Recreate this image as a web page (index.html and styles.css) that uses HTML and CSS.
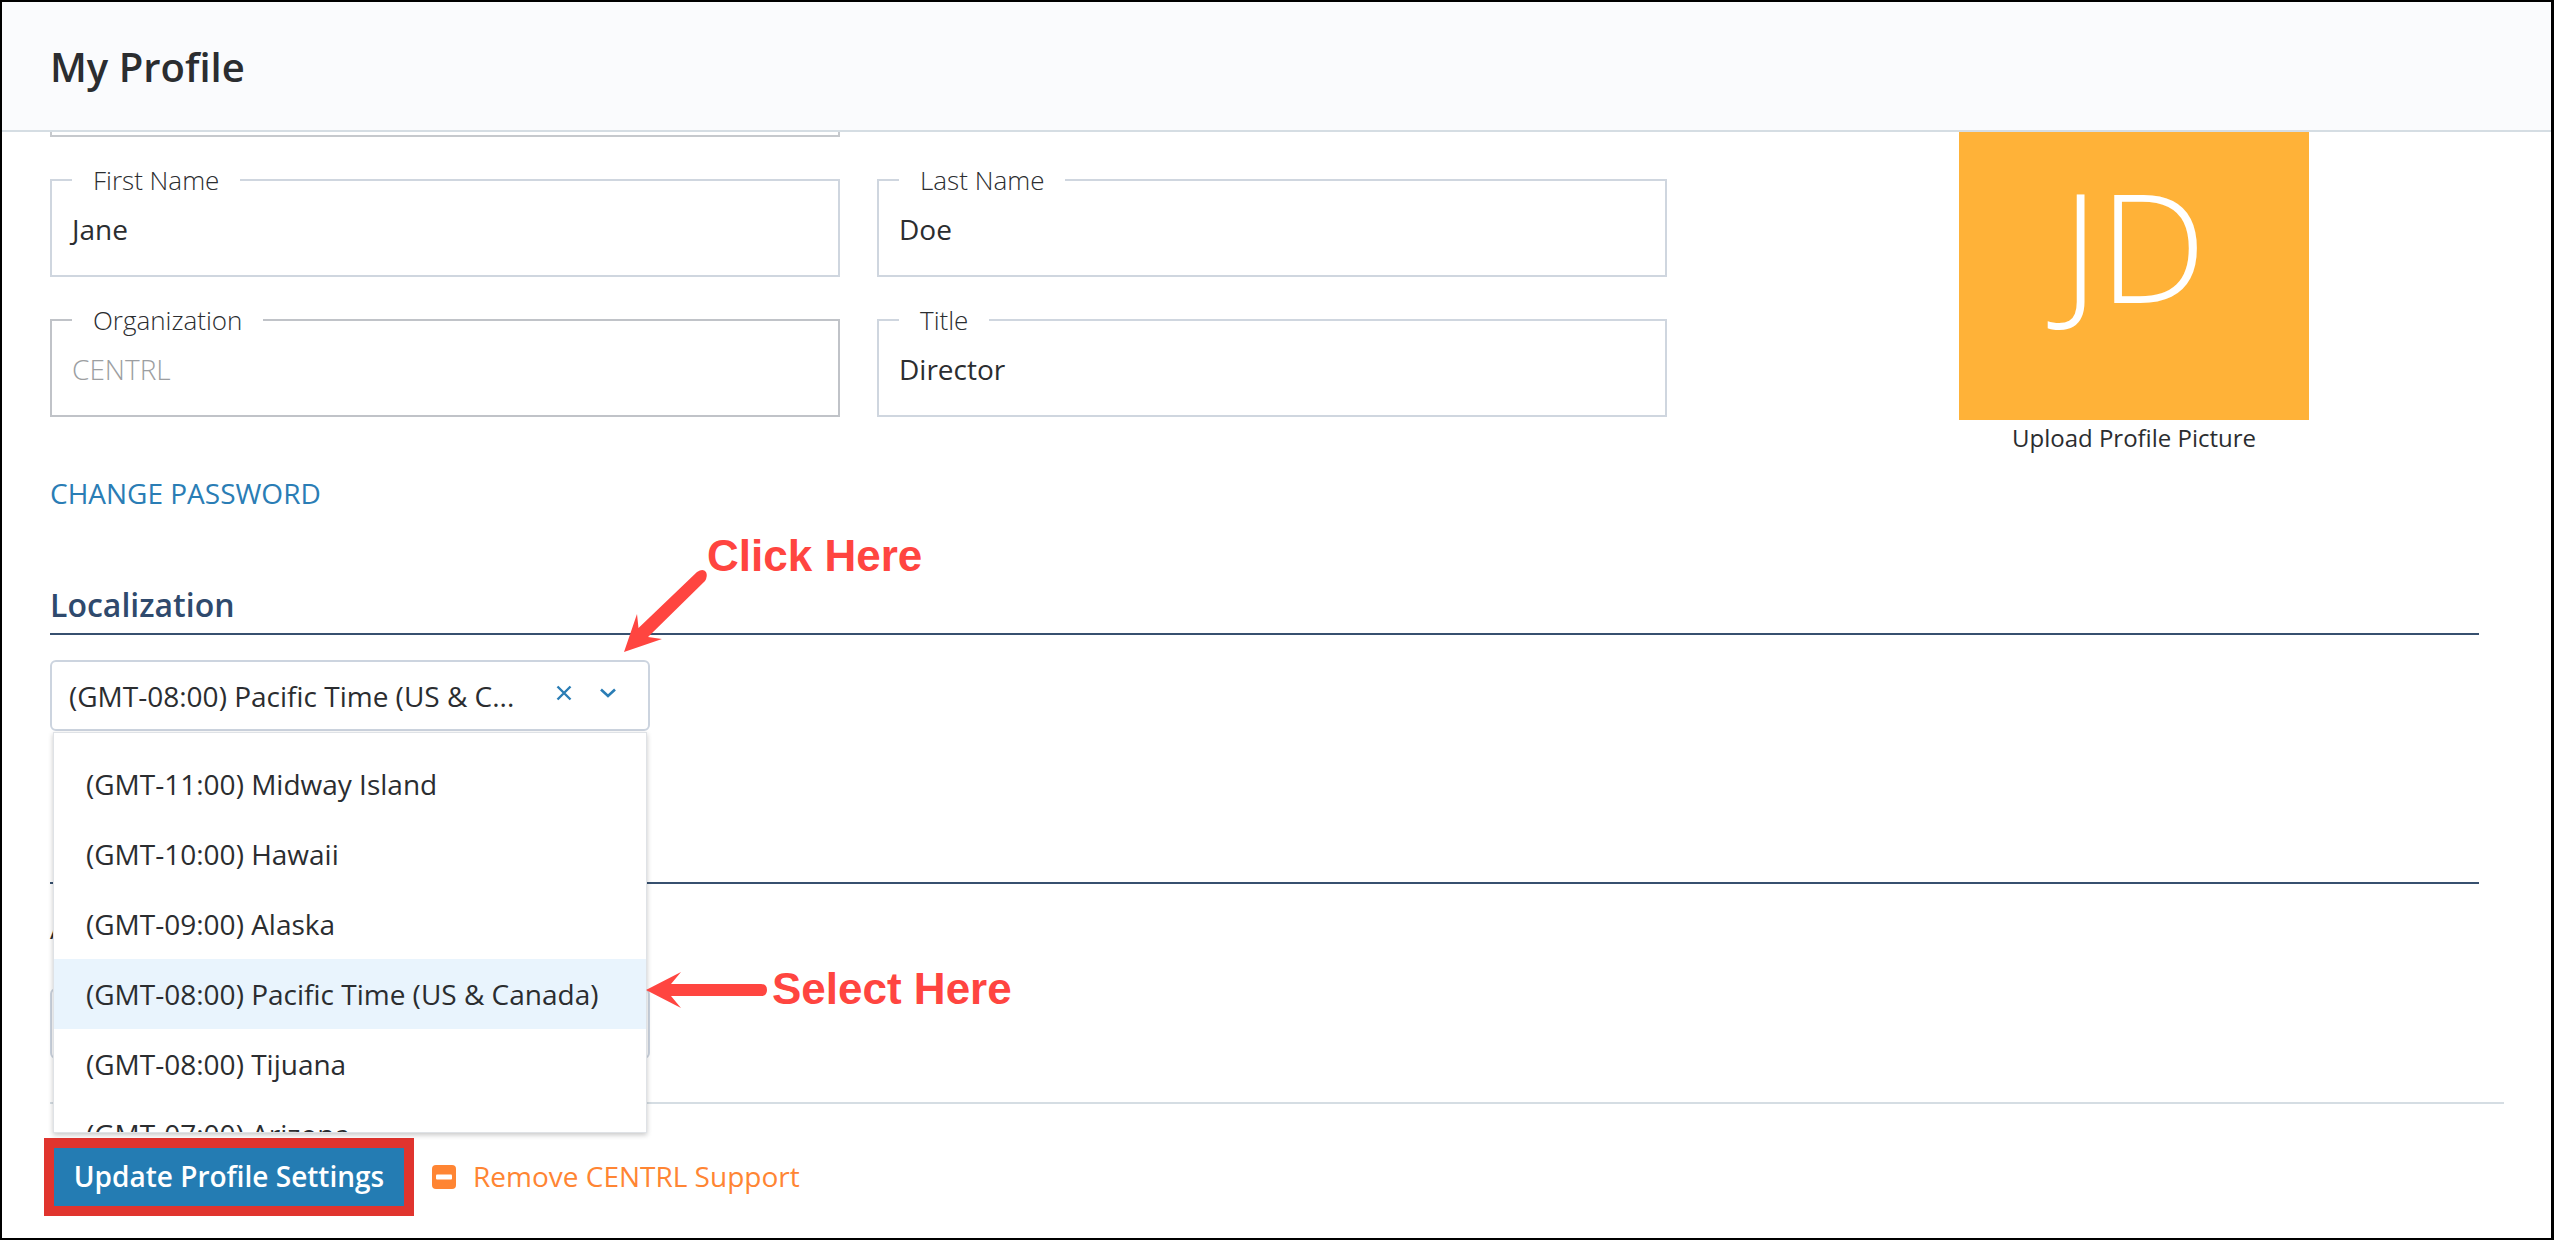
FILE: index.html
```html
<!DOCTYPE html>
<html lang="en">
<head>
<meta charset="utf-8">
<title>My Profile</title>
<link rel="stylesheet" href="styles.css">
</head>
<body>
<div class="frame">
  <header class="page-header"><h1>My Profile</h1></header>
  <main class="content">
    <div class="top-row">
      <div class="form-col">
        <div class="stub"></div>
        <div class="field-grid">
          <fieldset class="field"><legend>First Name</legend><span>Jane</span></fieldset>
          <fieldset class="field"><legend>Last Name</legend><span>Doe</span></fieldset>
          <fieldset class="field disabled"><legend>Organization</legend><span>CENTRL</span></fieldset>
          <fieldset class="field"><legend>Title</legend><span>Director</span></fieldset>
        </div>
        <a class="change-link" href="#">CHANGE PASSWORD</a>
      </div>
      <div class="avatar-col">
        <div class="avatar">JD</div>
        <div class="avatar-caption">Upload Profile Picture</div>
      </div>
    </div>

    <section class="section loc">
      <h2>Localization</h2>
      <div class="select-wrap">
        <div class="select">
          <span class="select-value">(GMT-08:00) Pacific Time (US &amp; C...</span>
          <svg class="ico-x" viewBox="0 0 16 16" width="16" height="16"><path d="M1.5 1.500l13 13M14.500 1.500l-13 13" fill="none" stroke="#2a7db5" stroke-width="2.4"/></svg>
          <svg class="ico-chev" viewBox="0 0 16 10" width="16" height="10"><path d="M1 1.500l7 6.500 7-6.500" fill="none" stroke="#2a7db5" stroke-width="2.6"/></svg>
        </div>
        <ul class="menu">
          <li>(GMT-11:00) Midway Island</li>
          <li>(GMT-10:00) Hawaii</li>
          <li>(GMT-09:00) Alaska</li>
          <li class="active">(GMT-08:00) Pacific Time (US &amp; Canada)</li>
          <li>(GMT-08:00) Tijuana</li>
          <li>(GMT-07:00) Arizona</li>
        </ul>
      </div>
    </section>

    <section class="section acc">
      <div class="acc-line"></div>
      <div class="acc-label">A</div>
      <div class="select under"></div>
    </section>

    <hr class="rule">

    <div class="actions">
      <button class="primary" type="button">Update Profile Settings</button>
      <a class="remove" href="#">
        <svg viewBox="0 0 24 24" width="24" height="24"><rect width="24" height="24" rx="4" fill="#ff8533"/><rect x="4" y="9.500" width="16" height="5" rx="1" fill="#fff"/></svg>
        <span>Remove CENTRL Support</span>
      </a>
    </div>
  </main>

  <svg class="arrows" viewBox="0 0 2554 1240" width="2554" height="1240">
    <path d="M624 652L637 614 638.500 628 697 572Q703 568 706 572 708 576 705 581L648 637 662 639Z" fill="#ff4540"/>
    <path d="M646 990L681 972 671 984H761Q767 984 767 990 767 996 761 996H671L681 1008Z" fill="#ff4540"/>
  </svg>
  <div class="note note-click">Click Here</div>
  <div class="note note-select">Select Here</div>
</div>
</body>
</html>
```

FILE: styles.css
```css
* { box-sizing: border-box; }
html, body { margin: 0; padding: 0; }
body { background: #fff; font-family: "Open Sans", sans-serif; color: #2b2d30; }
.frame {
  position: relative;
  width: 2554px;
  height: 1240px;
  border: 2px solid #000;
  border-right-width: 3px;
  overflow: hidden;
  background: #fff;
}
.page-header {
  height: 130px;
  background: #fafbfd;
  border-bottom: 2px solid #d5dde3;
  display: flex;
  align-items: center;
  padding-left: 48px;
}
.page-header h1 { margin: 0; font-size: 40px; font-weight: 600; color: #2b2d30; }
.content { padding-left: 48px; }
.top-row { display: flex; height: 376px; }
.form-col { width: 1617px; }
.stub {
  height: 5px;
  width: 790px;
  border: 2px solid #c6c9cd;
  border-top: 0;
}
.field-grid {
  display: grid;
  grid-template-columns: 790px 790px;
  column-gap: 37px;
  row-gap: 27px;
  margin-top: 27px;
}
.field {
  margin: 0;
  padding: 0 0 0 20px;
  height: 113px;
  min-width: 0;
  border: 2px solid #cfd6df;
  font-size: 28px;
}
.field legend {
  padding: 0 21px;
  font-size: 26px;
  font-weight: 300;
  line-height: 32px;
  color: #2b2d30;
}
.field span { display: block; line-height: 36px; margin-top: 15px; }
.field.disabled { border-color: #c0c3c8; }
.field.disabled span { color: #9c9ea1; font-weight: 300; }
.change-link {
  display: block;
  margin-top: 58px;
  font-size: 28px;
  line-height: 36px;
  color: #2a7db5;
  text-decoration: none;
}
.avatar-col { margin-left: 292px; width: 350px; }
.avatar {
  height: 288px;
  background: #ffb238;
  color: #fff;
  font-size: 152px;
  font-weight: 350;
  line-height: 226px;
  text-align: center;
}
.avatar-caption { font-size: 24px; line-height: 30px; margin-top: 3px; text-align: center; }
.section { width: 2429px; }
.section h2 {
  margin: 0;
  font-size: 32px;
  font-weight: 600;
  line-height: 40px;
  color: #2f4a6d;
  border-bottom: 2px solid #37506f;
  padding-bottom: 8px;
}
.loc { margin-top: 77px; height: 249px; }
.select-wrap { position: relative; width: 600px; margin-top: 25px; }
.select {
  height: 71px;
  border: 2px solid #ccd4df;
  border-radius: 6px;
  display: flex;
  align-items: center;
  padding-left: 17px;
  font-size: 28px;
}
.select-value { width: 476px; white-space: nowrap; }
.ico-x { margin: -6px 0 0 11px; }
.ico-chev { margin: -6px 0 0 28px; }
.menu {
  position: absolute;
  z-index: 2;
  top: 72px;
  left: 3px;
  width: 594px;
  height: 401px;
  margin: 0;
  padding: 16px 0 0;
  list-style: none;
  overflow: hidden;
  background: #fff;
  border: 1px solid #dfe2e6;
  box-shadow: 0 2px 5px rgba(0, 0, 0, .22);
  font-size: 28px;
}
.menu li { height: 70px; line-height: 70px; padding-left: 32px; white-space: nowrap; }
.menu li.active { background: #e9f4fd; }
.acc { height: 268px; }
.acc-line { height: 50px; border-bottom: 2px solid #37506f; }
.acc-label { margin-top: 26px; font-size: 28px; line-height: 36px; }
.under { width: 600px; margin-top: 42px; }
.rule {
  width: 2454px;
  margin: 0;
  border: 0;
  border-top: 2px solid #d5dde3;
}
.actions { display: flex; align-items: center; margin: 34px 0 0 -6px; }
.primary {
  width: 370px;
  height: 78px;
  background: #247cb3;
  border: 10px solid #e0342e;
  color: #fff;
  font: 600 28px "Open Sans", sans-serif;
  padding: 0 0 3px;
}
.remove {
  display: flex;
  align-items: center;
  gap: 17px;
  margin-left: 18px;
  font-size: 28px;
  color: #ff8533;
  text-decoration: none;
}
.remove span { padding-bottom: 2px; }
.arrows { position: absolute; left: -2px; top: -2px; z-index: 3; pointer-events: none; }
.note {
  position: absolute;
  z-index: 3;
  font-family: "Liberation Sans", Arial, sans-serif;
  font-weight: 700;
  font-size: 44px;
  line-height: 50px;
  color: #ff4540;
  white-space: nowrap;
}
.note-click { left: 705px; top: 529px; }
.note-select { left: 770px; top: 962px; }
```
